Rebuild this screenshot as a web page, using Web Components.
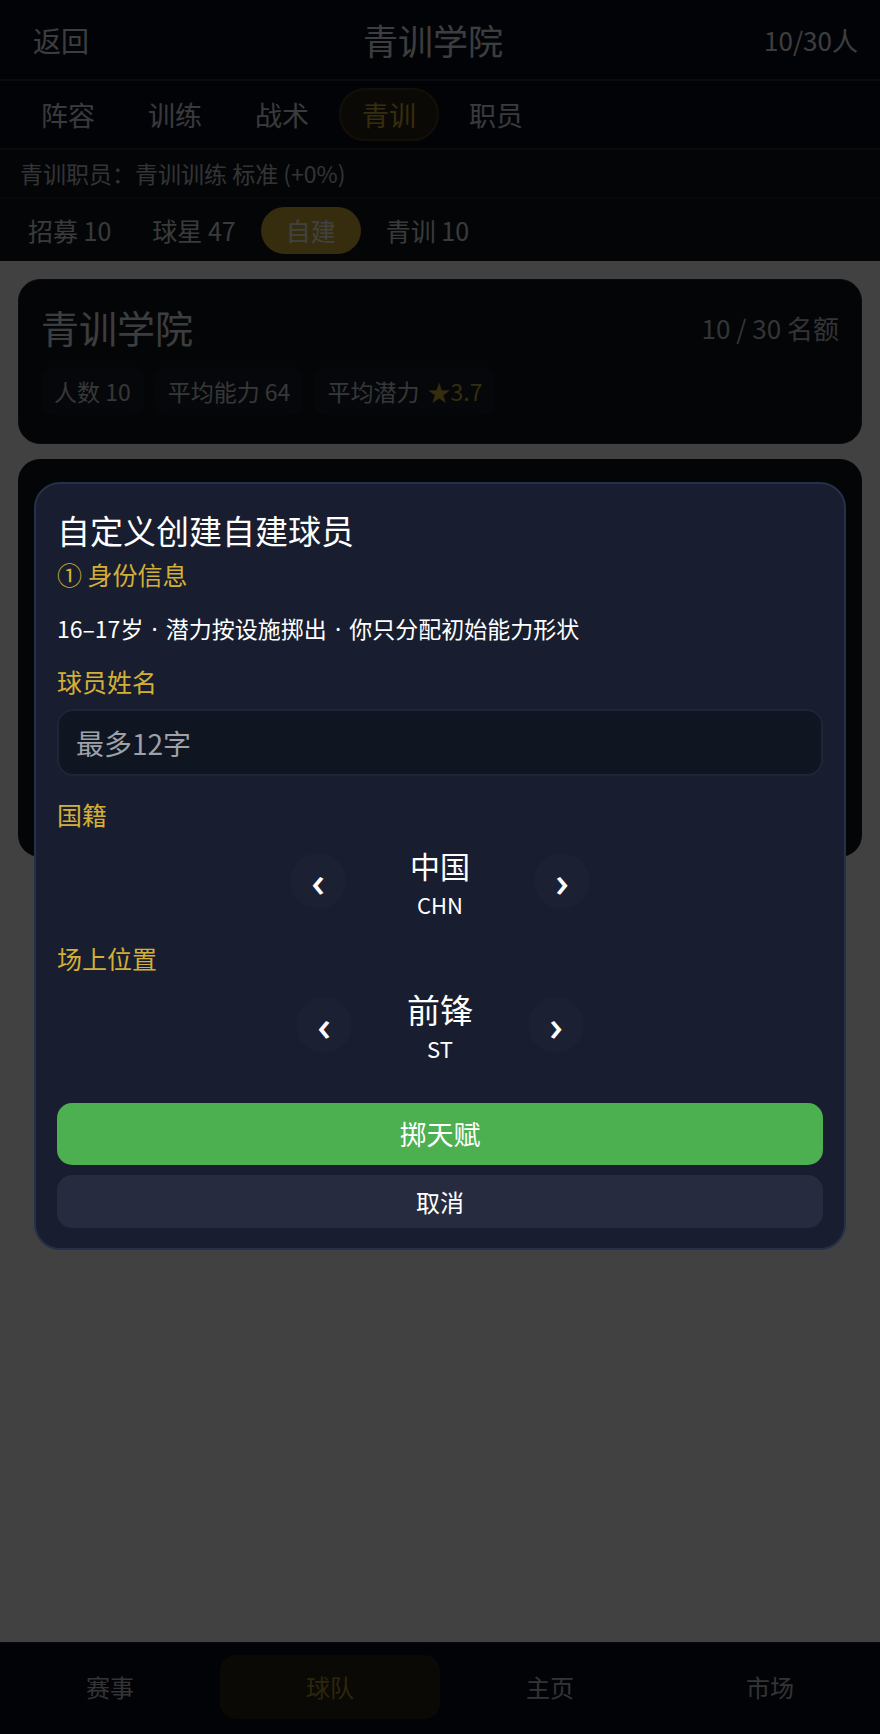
<!DOCTYPE html>
<html lang="zh-CN">
<head>
<meta charset="utf-8">
<meta name="viewport" content="width=device-width, initial-scale=1">
<title>青训学院</title>
<style>
  body {
    margin: 0;
    background: #fff;
    color: #eceef2;
    font-family: "Noto Sans CJK SC", sans-serif;
    --gold: #d4af37;
    --muted: #c8cad0;
    --bar: #080c1c;
    --panel: #10141f;
    --line: #22273a;
  }

  .dot {
    margin: 0 3px;
    font-family: "Noto Sans", sans-serif;
  }
</style>
</head>
<body>
<academy-app>
  <page-header slot="top" count="10/30人">青训学院</page-header>
  <section-nav slot="top" items="阵容,训练,战术,青训,职员" active="青训"></section-nav>
  <staff-line slot="top">青训职员：青训训练 标准 (+0%)</staff-line>
  <filter-tabs slot="top" items="招募 10,球星 47,自建,青训 10" active="自建"></filter-tabs>

  <academy-card>
    <span slot="title">青训学院</span>
    <span slot="quota">10 / 30 名额</span>
    <stat-chip>人数 10</stat-chip>
    <stat-chip>平均能力 64</stat-chip>
    <stat-chip>平均潜力 <b slot="value">★3.7</b></stat-chip>
  </academy-card>
  <player-list></player-list>

  <bottom-nav slot="bottom" items="赛事,球队,主页,市场" active="球队"></bottom-nav>
</academy-app>

<create-dialog>
  <span slot="title">自定义创建自建球员</span>
  <span slot="step">① 身份信息</span>
  <span slot="hint">16–17岁 <span class="dot">·</span> 潜力按设施掷出 <span class="dot">·</span> 你只分配初始能力形状</span>
  <name-field label="球员姓名" placeholder="最多12字"></name-field>
  <option-stepper label="国籍" value="中国" code="CHN"></option-stepper>
  <option-stepper label="场上位置" value="前锋" code="ST" large></option-stepper>
  <dialog-button slot="actions" primary>掷天赋</dialog-button>
  <dialog-button slot="actions">取消</dialog-button>
</create-dialog>

<script>
class BaseElement extends HTMLElement {
  constructor() {
    super();
    this.root = this.attachShadow({ mode: 'open' });
  }

  connectedCallback() {
    this.root.innerHTML = this.template();
  }

  attr(name) {
    return this.getAttribute(name) || '';
  }

  get items() {
    return this.attr('items').split(',');
  }

  links() {
    const active = this.attr('active');
    return this.items
      .map(item => `<a href="#"${item === active ? ' class="active" aria-current="page"' : ''}>${item}</a>`)
      .join('');
  }
}

class AcademyApp extends BaseElement {
  template() {
    return `
      <style>
        :host {
          display: flex;
          flex-direction: column;
          min-height: 100vh;
        }

        header {
          background: var(--panel);
        }

        main {
          flex: 1;
          display: flex;
          flex-direction: column;
          gap: 15px;
          padding: 18px;
        }
      </style>
      <header><slot name="top"></slot></header>
      <main><slot></slot></main>
      <slot name="bottom"></slot>
    `;
  }
}

class PageHeader extends BaseElement {
  template() {
    return `
      <style>
        :host {
          display: flex;
          align-items: center;
          justify-content: space-between;
          height: 79px;
          padding: 0 22px 0 20px;
          background: var(--bar);
          border-bottom: 2px solid var(--line);
        }

        button {
          padding: 0 13px;
          border: 0;
          background: none;
          color: inherit;
          font: 28px/40px "Noto Sans CJK SC", sans-serif;
        }

        h1 {
          margin: 0;
          font-size: 35px;
          font-weight: 400;
          line-height: 52px;
        }

        .count {
          font-size: 26px;
        }
      </style>
      <button type="button">返回</button>
      <h1><slot></slot></h1>
      <span class="count">${this.attr('count')}</span>
    `;
  }
}

class SectionNav extends BaseElement {
  template() {
    return `
      <style>
        :host {
          display: block;
          background: var(--bar);
          border-bottom: 2px solid var(--line);
        }

        nav {
          display: flex;
          gap: 7px;
          padding: 7px 18px;
        }

        a {
          padding: 0 21px;
          border: 2px solid transparent;
          border-radius: 26px;
          color: #dfe1e6;
          font-size: 27px;
          line-height: 49px;
          text-decoration: none;
        }

        a.active {
          background: #2a2419;
          border-color: #4a3d1c;
          color: var(--gold);
        }
      </style>
      <nav>${this.links()}</nav>
    `;
  }
}

class StaffLine extends BaseElement {
  template() {
    return `
      <style>
        :host {
          display: block;
          padding: 6px 20px;
          border-bottom: 1px solid var(--line);
          color: var(--muted);
          font-size: 23px;
          line-height: 35px;
        }
      </style>
      <slot></slot>
    `;
  }
}

class FilterTabs extends BaseElement {
  template() {
    return `
      <style>
        :host {
          display: block;
        }

        nav {
          display: flex;
          gap: 9px;
          padding: 9px 12px 7px;
        }

        a {
          box-sizing: border-box;
          padding: 0 16px;
          border-radius: 24px;
          color: #dfe1e6;
          font-size: 25px;
          line-height: 47px;
          text-align: center;
          text-decoration: none;
        }

        a.active {
          min-width: 100px;
          background: var(--gold);
          color: #fff;
        }
      </style>
      <nav>${this.links()}</nav>
    `;
  }
}

class AcademyCard extends BaseElement {
  template() {
    return `
      <style>
        :host {
          display: block;
          padding: 20px 22px 28px;
          border: 1px solid #2a2d36;
          border-radius: 22px;
          background: var(--panel);
        }

        .head {
          display: flex;
          align-items: center;
          justify-content: space-between;
          margin-bottom: 13px;
        }

        h2 {
          margin: 0;
          font-size: 38px;
          font-weight: 400;
          line-height: 54px;
        }

        .quota {
          color: var(--muted);
          font-size: 26px;
        }

        .chips {
          display: flex;
          gap: 11px;
        }
      </style>
      <div class="head">
        <h2><slot name="title"></slot></h2>
        <span class="quota"><slot name="quota"></slot></span>
      </div>
      <div class="chips"><slot></slot></div>
    `;
  }
}

class StatChip extends BaseElement {
  template() {
    return `
      <style>
        :host {
          padding: 0 13px;
          border-radius: 12px;
          background: #191c28;
          color: #d4d6db;
          font-size: 23px;
          line-height: 48px;
        }

        ::slotted(b) {
          margin-left: 3px;
          color: var(--gold);
          font-weight: 400;
        }
      </style>
      <slot></slot><slot name="value"></slot>
    `;
  }
}

class PlayerList extends BaseElement {
  template() {
    return `
      <style>
        :host {
          display: block;
          min-height: 398px;
          border-radius: 22px;
          background: var(--panel);
        }
      </style>
    `;
  }
}

class BottomNav extends BaseElement {
  template() {
    return `
      <style>
        :host {
          display: block;
          padding: 12px 0 15px;
          border-top: 1px solid var(--line);
          background: var(--bar);
        }

        nav {
          display: grid;
          grid-template-columns: repeat(4, 1fr);
        }

        a {
          border-radius: 16px;
          color: var(--muted);
          font-size: 24px;
          line-height: 64px;
          text-align: center;
          text-decoration: none;
        }

        a.active {
          background: #292319;
          color: #b3942f;
        }
      </style>
      <nav>${this.links()}</nav>
    `;
  }
}

class CreateDialog extends BaseElement {
  template() {
    return `
      <style>
        :host {
          position: fixed;
          inset: 0;
          display: flex;
          align-items: center;
          padding: 0 34px 2px;
          background: rgba(0, 0, 0, 0.745);
        }

        section {
          flex: 1;
          padding: 20px 21px;
          border: 2px solid #27304a;
          border-radius: 26px;
          background: #181e2f;
          color: #fff;
        }

        h2 {
          margin: 0;
          font-size: 33px;
          font-weight: 400;
          line-height: 52px;
        }

        .step {
          color: var(--gold);
          font-size: 25px;
          line-height: 36px;
        }

        .hint {
          margin: 18px 0 16px;
          font-size: 23px;
          line-height: 36px;
        }

        .fields {
          display: flex;
          flex-direction: column;
          gap: 20px;
        }

        .actions {
          display: flex;
          flex-direction: column;
          gap: 10px;
          margin-top: 39px;
        }
      </style>
      <section role="dialog" aria-modal="true" aria-labelledby="heading">
        <h2 id="heading"><slot name="title"></slot></h2>
        <div class="step"><slot name="step"></slot></div>
        <div class="hint"><slot name="hint"></slot></div>
        <div class="fields"><slot></slot></div>
        <div class="actions"><slot name="actions"></slot></div>
      </section>
    `;
  }
}

class NameField extends BaseElement {
  template() {
    return `
      <style>
        :host {
          display: flex;
          flex-direction: column;
          gap: 10px;
        }

        label {
          color: var(--gold);
          font-size: 25px;
          line-height: 36px;
        }

        input {
          box-sizing: border-box;
          width: 100%;
          height: 67px;
          padding: 0 17px;
          border: 2px solid #1e2536;
          border-radius: 16px;
          background: #101522;
          color: #fff;
          font: 28px/40px "Noto Sans CJK SC", sans-serif;
        }

        input::placeholder {
          color: #9fa1a7;
        }
      </style>
      <label for="name">${this.attr('label')}</label>
      <input id="name" type="text" maxlength="12" placeholder="${this.attr('placeholder')}">
    `;
  }
}

class OptionStepper extends BaseElement {
  template() {
    return `
      <style>
        :host {
          display: flex;
          flex-direction: column;
          gap: 10px;
          --value-size: 30px;
          --value-width: 188px;
        }

        :host([large]) {
          --value-size: 33px;
          --value-width: 176px;
        }

        .label {
          color: var(--gold);
          font-size: 25px;
          line-height: 36px;
        }

        .row {
          display: flex;
          align-items: center;
          justify-content: center;
        }

        .value {
          width: var(--value-width);
          text-align: center;
        }

        .name {
          font-size: var(--value-size);
          line-height: 46px;
        }

        .code {
          font-size: 22px;
          line-height: 32px;
        }

        button {
          width: 56px;
          height: 56px;
          padding: 0;
          border: 0;
          border-radius: 50%;
          background: #1b2132;
          color: #fff;
          font: 500 42px/56px "Noto Sans", sans-serif;
        }
      </style>
      <div class="label" id="label">${this.attr('label')}</div>
      <div class="row" role="group" aria-labelledby="label">
        <button type="button" aria-label="上一个">‹</button>
        <div class="value">
          <div class="name">${this.attr('value')}</div>
          <div class="code">${this.attr('code')}</div>
        </div>
        <button type="button" aria-label="下一个">›</button>
      </div>
    `;
  }
}

class DialogButton extends BaseElement {
  template() {
    return `
      <style>
        :host {
          display: block;
        }

        button {
          display: block;
          width: 100%;
          padding: 0;
          border: 0;
          border-radius: 15px;
          background: #272b3f;
          color: #fff;
          font: 24px/53px "Noto Sans CJK SC", sans-serif;
        }

        :host([primary]) button {
          background: #4caf50;
          font-size: 27px;
          line-height: 62px;
        }
      </style>
      <button type="button"><slot></slot></button>
    `;
  }
}

customElements.define('academy-app', AcademyApp);
customElements.define('page-header', PageHeader);
customElements.define('section-nav', SectionNav);
customElements.define('staff-line', StaffLine);
customElements.define('filter-tabs', FilterTabs);
customElements.define('academy-card', AcademyCard);
customElements.define('stat-chip', StatChip);
customElements.define('player-list', PlayerList);
customElements.define('bottom-nav', BottomNav);
customElements.define('create-dialog', CreateDialog);
customElements.define('name-field', NameField);
customElements.define('option-stepper', OptionStepper);
customElements.define('dialog-button', DialogButton);
</script>
</body>
</html>
